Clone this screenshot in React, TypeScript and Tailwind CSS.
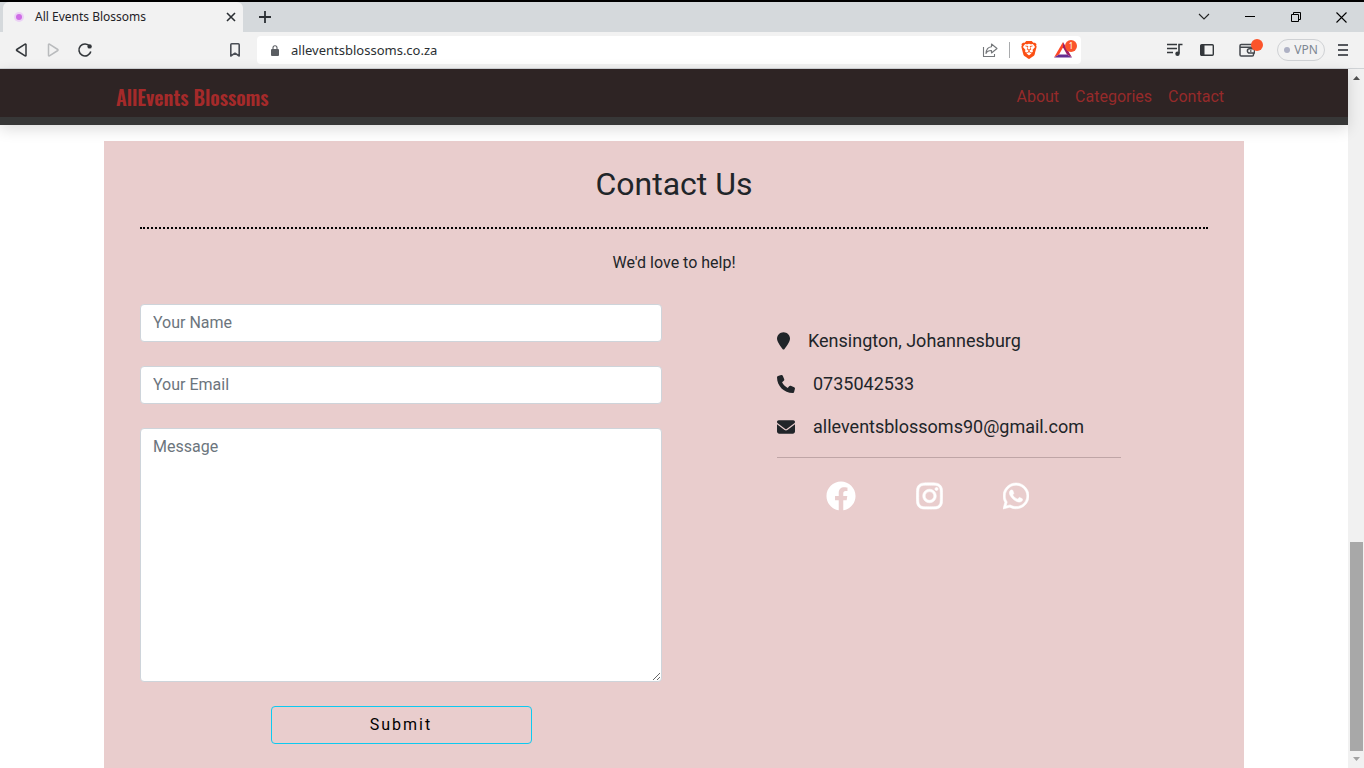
import React from "react";
import { FaFacebook, FaInstagram, FaWhatsapp } from "react-icons/fa";
import { FaEnvelope, FaLocationPin, FaPhone } from "react-icons/fa6";
import { SiBrave } from "react-icons/si";

function TabStrip() {
  return (
    <div className="flex h-[30px] shrink-0 items-stretch bg-[#d5d9dc] pl-[3px]">
      <div className="flex w-60 items-center gap-2 rounded-t-md bg-[#f2f2f2] pr-1.5 pl-2">
        <svg width="16" height="16" viewBox="0 0 16 16" className="shrink-0" aria-hidden="true">
          <circle cx="8" cy="8" r="5" fill="#ecd2f5" />
          <circle cx="8" cy="8" r="3" fill="#cf6de6" />
        </svg>
        <span className="grow text-xs text-[#1f2327]">All Events Blossoms</span>
        <button type="button" aria-label="Close tab" className="flex size-3 items-center justify-center">
          <svg width="10" height="10" viewBox="0 0 10 10" stroke="#2b2f33" strokeWidth="1.6" aria-hidden="true">
            <path d="M1 1l8 8M9 1L1 9" />
          </svg>
        </button>
      </div>
      <button type="button" aria-label="New tab" className="flex w-11 items-center justify-center">
        <svg width="12" height="12" viewBox="0 0 12 12" stroke="#2b2f33" strokeWidth="1.8" aria-hidden="true">
          <path d="M6 0v12M0 6h12" />
        </svg>
      </button>
      <div className="ml-auto flex">
        <button type="button" aria-label="Search tabs" className="flex w-[46px] items-center justify-center">
          <svg width="12" height="8" viewBox="0 0 12 8" fill="none" stroke="#222" strokeWidth="1.1" aria-hidden="true">
            <path d="M1 1l5 5 5-5" />
          </svg>
        </button>
        <button type="button" aria-label="Minimise" className="flex w-[46px] items-center justify-center">
          <svg width="10" height="10" viewBox="0 0 10 10" aria-hidden="true">
            <path d="M0 4h10v1H0z" fill="#000" />
          </svg>
        </button>
        <button type="button" aria-label="Restore" className="flex w-[46px] items-center justify-center">
          <svg width="10" height="10" viewBox="0 0 10 10" fill="none" stroke="#000" strokeWidth="1" aria-hidden="true">
            <path d="M.5 2.5h7v7h-7zM2.500 2V.5h7v7H8" />
          </svg>
        </button>
        <button type="button" aria-label="Close" className="flex w-[45px] items-center justify-center">
          <svg width="11" height="11" viewBox="0 0 11 11" stroke="#000" strokeWidth="1.1" aria-hidden="true">
            <path d="M.5.5l10 10M10.500.5l-10 10" />
          </svg>
        </button>
      </div>
    </div>
  );
}

function Toolbar() {
  return (
    <div className="flex h-[37px] shrink-0 items-center border-b border-[#d0d3d6] bg-[#f2f2f2] px-[13px]">
      <div className="flex gap-4">
        <button type="button" aria-label="Back">
          <svg width="16" height="16" viewBox="0 0 16 16" fill="none" stroke="#33373b" strokeWidth="1.5" strokeLinejoin="round" className="block" aria-hidden="true">
            <path d="M13 2.600v10.800c0 .5-.5.7-.9.500L3.700 8.500c-.4-.3-.4-.7 0-1l8.400-5.400c.4-.2.900 0 .9.500z" />
          </svg>
        </button>
        <button type="button" aria-label="Forward">
          <svg width="16" height="16" viewBox="0 0 16 16" fill="none" stroke="#b9bbbd" strokeWidth="1.5" strokeLinejoin="round" className="block" aria-hidden="true">
            <path d="M3.500 2.600v10.800c0 .5.5.7.9.500l8.400-5.400c.4-.3.400-.7 0-1L4.400 2.100c-.4-.2-.9 0-.9.500z" />
          </svg>
        </button>
        <button type="button" aria-label="Reload">
          <svg width="16" height="16" viewBox="0 0 16 16" fill="none" stroke="#33373b" strokeWidth="1.6" className="block" aria-hidden="true">
            <path d="M13.800 9.500A6 6 0 1 1 12.800 4.400" />
            <circle cx="12.600" cy="4.400" r="2.200" fill="#33373b" stroke="none" />
          </svg>
        </button>
      </div>
      <button type="button" aria-label="Bookmark this page" className="mr-[14px] ml-[134px]">
        <svg width="16" height="16" viewBox="0 0 16 16" fill="none" stroke="#4a4e55" strokeWidth="1.6" strokeLinejoin="round" className="block" aria-hidden="true">
          <path d="M3.800 2.800c0-.6.400-1 1-1h6.400c.6 0 1 .4 1 1v11.200L8 11.200 3.800 14z" />
        </svg>
      </button>
      <div className="flex h-7 grow items-center rounded bg-white pr-[7px] pl-[14px]">
        <svg width="8" height="11" viewBox="0 0 8 11" className="mr-3 shrink-0" aria-hidden="true">
          <rect y="4" width="8" height="7" rx="1" fill="#5a5d62" />
          <path d="M2 4.500V2.800a2 2 0 0 1 4 0v1.700" fill="none" stroke="#5a5d62" strokeWidth="1.100" />
        </svg>
        <input
          aria-label="Address"
          defaultValue="alleventsblossoms.co.za"
          className="h-6 min-w-0 grow bg-transparent text-[13px] text-[#2b2f33] outline-none"
        />
        <button type="button" aria-label="Share" className="mr-[11px]">
          <svg width="16" height="16" viewBox="0 0 16 16" fill="none" stroke="#74777a" strokeWidth="1.100" strokeLinejoin="round" className="block" aria-hidden="true">
            <path d="M1.500 5v9.500h11V12" />
            <path d="M9.500 2l5.500 4.500L9.500 11V8.500C7 8.400 5 9.300 4 11.500 4.200 7.500 6 5 9.500 4.700z" />
          </svg>
        </button>
        <span className="mr-[10px] h-4 w-px bg-[#a9abad]" />
        <button type="button" aria-label="Brave Shields" className="mr-4">
          <SiBrave size={18} color="#fb4f14" className="block" />
        </button>
        <button type="button" aria-label="Brave Rewards" className="relative mr-0.5">
          <svg width="18" height="18" viewBox="0 0 18 18" className="block" aria-hidden="true">
            <path d="M9 1L0 16.500 5 13.500 9 6.500z" fill="#ff4724" />
            <path d="M9 1l9 15.500-5-3L9 6.500z" fill="#9e1f63" />
            <path d="M0 16.500h18l-5-3H5z" fill="#662d91" />
          </svg>
          <span className="absolute -top-px left-[11px] flex size-3 items-center justify-center rounded-full bg-[#fb542b] text-[8px] text-white">1</span>
        </button>
      </div>
      <button type="button" aria-label="Media controls" className="ml-[85px]">
        <svg width="17" height="16" viewBox="0 0 17 16" className="block" aria-hidden="true">
          <path d="M1 2.500h10M1 6.500h10M1 10.500h6" stroke="#33373b" strokeWidth="1.500" />
          <path d="M13 11.500V2.500h3.500" fill="none" stroke="#33373b" strokeWidth="1.600" />
          <circle cx="11.500" cy="11.700" r="2.200" fill="#33373b" />
        </svg>
      </button>
      <button type="button" aria-label="Sidebar" className="ml-4">
        <svg width="16" height="16" viewBox="0 0 16 16" className="block" aria-hidden="true">
          <rect x="1.700" y="2.700" width="12.600" height="10.600" rx="1" fill="none" stroke="#33373b" strokeWidth="1.400" />
          <path d="M2 3h3.500v10H2z" fill="#33373b" />
        </svg>
      </button>
      <button type="button" aria-label="Wallet" className="relative ml-6">
        <svg width="16" height="16" viewBox="0 0 16 16" fill="none" stroke="#44484d" strokeWidth="1.500" className="block" aria-hidden="true">
          <path d="M14.500 6V3.800c0-.8-.5-1.300-1.300-1.300H2.300C1.500 2.500 1 3 1 3.800v9c0 .8.5 1.300 1.300 1.300h10.900c.8 0 1.300-.5 1.300-1.300V11M1 5.300h13.500" />
          <path d="M15.500 6.800h-5a2 2 0 0 0 0 4.200h5z" />
          <path d="M11 8.900h1.500" />
        </svg>
        <span className="absolute -top-[3px] left-3 size-3 rounded-full bg-[#fb542b]" />
      </button>
      <button type="button" className="mr-[10px] ml-[22px] flex h-[22px] w-12 items-center justify-center gap-1 rounded-full border border-[#cfd1d4] text-xs text-[#7d8792]">
        <span className="size-1.5 rounded-full bg-[#aeb1c4]" />
        VPN
      </button>
      <button type="button" aria-label="Menu">
        <svg width="16" height="16" viewBox="0 0 16 16" className="block" aria-hidden="true">
          <path d="M3 3h10M3 8h10M3 13h10" stroke="#55585d" strokeWidth="1.800" />
        </svg>
      </button>
    </div>
  );
}

function Navbar() {
  return (
    <header className="relative border-b-8 border-[#373737] bg-[#2e2424] shadow-[0_4px_14px_rgba(0,0,0,0.14)]">
      <nav className="mx-auto flex h-12 max-w-[1140px] items-center px-3 pt-2">
        <a href="#home" className="font-['Oswald','Liberation_Sans_Narrow',sans-serif] text-xl font-semibold text-[#a52a2a]">AllEvents Blossoms</a>
        <div className="ml-auto flex gap-4 pr-2 text-base text-[#962a2a]">
          <a href="#about">About</a>
          <a href="#categories">Categories</a>
          <a href="#contact">Contact</a>
        </div>
      </nav>
    </header>
  );
}

const field =
  "block w-full rounded border border-[#ced4da] bg-white px-3 text-base leading-6 text-[#212529] placeholder-[#6c757d] outline-none";

function ContactForm() {
  return (
    <form className="flex flex-col gap-6" onSubmit={(e: React.FormEvent) => e.preventDefault()}>
      <input aria-label="Your Name" placeholder="Your Name" className={`${field} h-[38px] pt-1 pb-1.5`} />
      <input aria-label="Your Email" type="email" placeholder="Your Email" className={`${field} h-[38px] pt-1 pb-1.5`} />
      <textarea aria-label="Message" rows={10} placeholder="Message" className={`${field} h-[254px] py-1.5`} />
      <button type="submit" className="h-[38px] w-1/2 self-center rounded border border-[#0dcaf0] text-base tracking-[2px] text-black">
        Submit
      </button>
    </form>
  );
}

function ContactDetails() {
  return (
    <div className="pt-[23px] pl-[115px] text-lg leading-[27px]">
      <ul className="flex flex-col gap-4">
        <li className="flex items-center gap-[18px]">
          <FaLocationPin className="h-[18px] w-[13px]" />
          Kensington, Johannesburg
        </li>
        <li className="flex items-center gap-[18px]">
          <FaPhone className="size-[18px]" />
          0735042533
        </li>
        <li className="flex items-center gap-[18px]">
          <FaEnvelope className="size-[18px]" />
          alleventsblossoms90@gmail.com
        </li>
      </ul>
      <hr className="mt-[17px] max-w-[344px] border-[#bfa5a6]" />
      <div className="mt-[23px] flex items-center gap-[60px] pl-[49px] text-white">
        <a href="#facebook" aria-label="Facebook"><FaFacebook className="block size-[30px]" /></a>
        <a href="#instagram" aria-label="Instagram"><FaInstagram className="block h-[30px] w-[27px] stroke-current stroke-[10]" /></a>
        <a href="#whatsapp" aria-label="WhatsApp"><FaWhatsapp className="block h-[30px] w-[26px] stroke-current stroke-[10]" /></a>
      </div>
    </div>
  );
}

function Scrollbar() {
  return (
    <div className="flex w-4 shrink-0 flex-col items-center bg-[#f1f1f1] py-[7px]" aria-hidden="true">
      <svg width="7" height="4" viewBox="0 0 7 4"><path d="M0 4h7L3.500 0z" fill="#505050" /></svg>
      <div className="mt-auto mb-1.5 ml-px h-[209px] w-[13px] bg-[#a8a8a8]" />
      <svg width="7" height="4" viewBox="0 0 7 4"><path d="M0 0h7L3.500 4z" fill="#a3a3a3" /></svg>
    </div>
  );
}

export default function App() {
  return (
    <div className="flex h-screen flex-col overflow-hidden border-t-2 border-black bg-white font-['Noto_Sans',sans-serif]">
      <TabStrip />
      <Toolbar />
      <div className="flex min-h-0 grow">
        <div className="flex min-w-0 grow flex-col font-['Roboto',sans-serif] text-[#212529]">
          <Navbar />
          <main className="mx-auto mt-4 w-full max-w-[1140px] grow bg-[#e9cdcd] px-9 pt-6">
            <h1 className="text-center text-[32px] leading-[38px]">Contact Us</h1>
            <hr className="mt-6 border-t-2 border-dotted border-black" />
            <p className="mt-[22px] text-center text-base leading-6">We'd love to help!</p>
            <div className="mt-[29px] grid grid-cols-[522fr_546fr]">
              <ContactForm />
              <ContactDetails />
            </div>
          </main>
        </div>
        <Scrollbar />
      </div>
    </div>
  );
}
